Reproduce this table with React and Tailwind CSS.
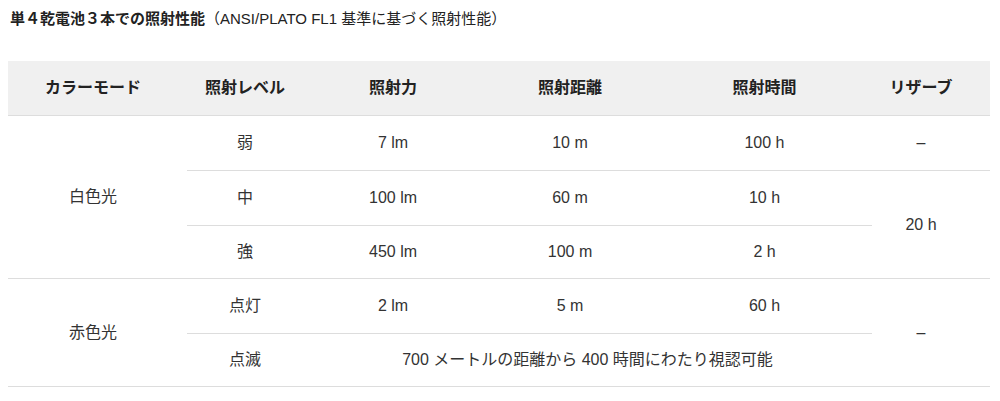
import React from 'react';

const FONT = { fontFamily: '"Liberation Sans", "Noto Sans CJK JP", sans-serif' };

const HEAD = ['カラーモード', '照射レベル', '照射力', '照射距離', '照射時間', 'リザーブ'];

const cell = 'flex items-center justify-center border-b border-[#dddddd] text-[16px] text-[#333333]';

export default function App() {
  return (
    <div className="bg-white w-[1000px] h-[401px] pl-[8px] pt-[8px]" style={FONT}>
      <h2 className="text-[15px] leading-[22px] text-[#222222] pl-[2px]">
        <span className="font-bold">単４乾電池３本での照射性能</span>
        <span>（ANSI/PLATO FL1 基準に基づく照射性能）</span>
      </h2>

      <div className="mt-[31px] grid w-[982px] grid-cols-[179px_116px_180px_174px_215px_118px] grid-rows-[55px_55px_55px_53px_55px_53px]">
        {HEAD.map((h, i) => (
          <div
            key={h}
            className={
              'flex items-center justify-center bg-[#f0f0f0] border-b border-[#dddddd] text-[16px] font-bold text-[#222222] ' +
              (i === 0 ? 'pr-[9px]' : i === 5 ? 'pr-[20px]' : '')
            }
          >
            {h}
          </div>
        ))}

        {/* 白色光 */}
        <div className={cell + ' row-span-3 pr-[9px]'}>白色光</div>
        <div className={cell}>弱</div>
        <div className={cell}>7 lm</div>
        <div className={cell}>10 m</div>
        <div className={cell}>100 h</div>
        <div className={cell + ' pr-[20px]'}>–</div>

        <div className={cell}>中</div>
        <div className={cell}>100 lm</div>
        <div className={cell}>60 m</div>
        <div className={cell}>10 h</div>
        <div className={cell + ' row-span-2 pr-[20px]'}>20 h</div>

        <div className={cell}>強</div>
        <div className={cell}>450 lm</div>
        <div className={cell}>100 m</div>
        <div className={cell}>2 h</div>

        {/* 赤色光 */}
        <div className={cell + ' row-span-2 pr-[9px]'}>赤色光</div>
        <div className={cell}>点灯</div>
        <div className={cell}>2 lm</div>
        <div className={cell}>5 m</div>
        <div className={cell}>60 h</div>
        <div className={cell + ' row-span-2 pr-[20px]'}>–</div>

        <div className={cell}>点滅</div>
        <div className={cell + ' col-span-3'}>700 メートルの距離から 400 時間にわたり視認可能</div>
      </div>
    </div>
  );
}
